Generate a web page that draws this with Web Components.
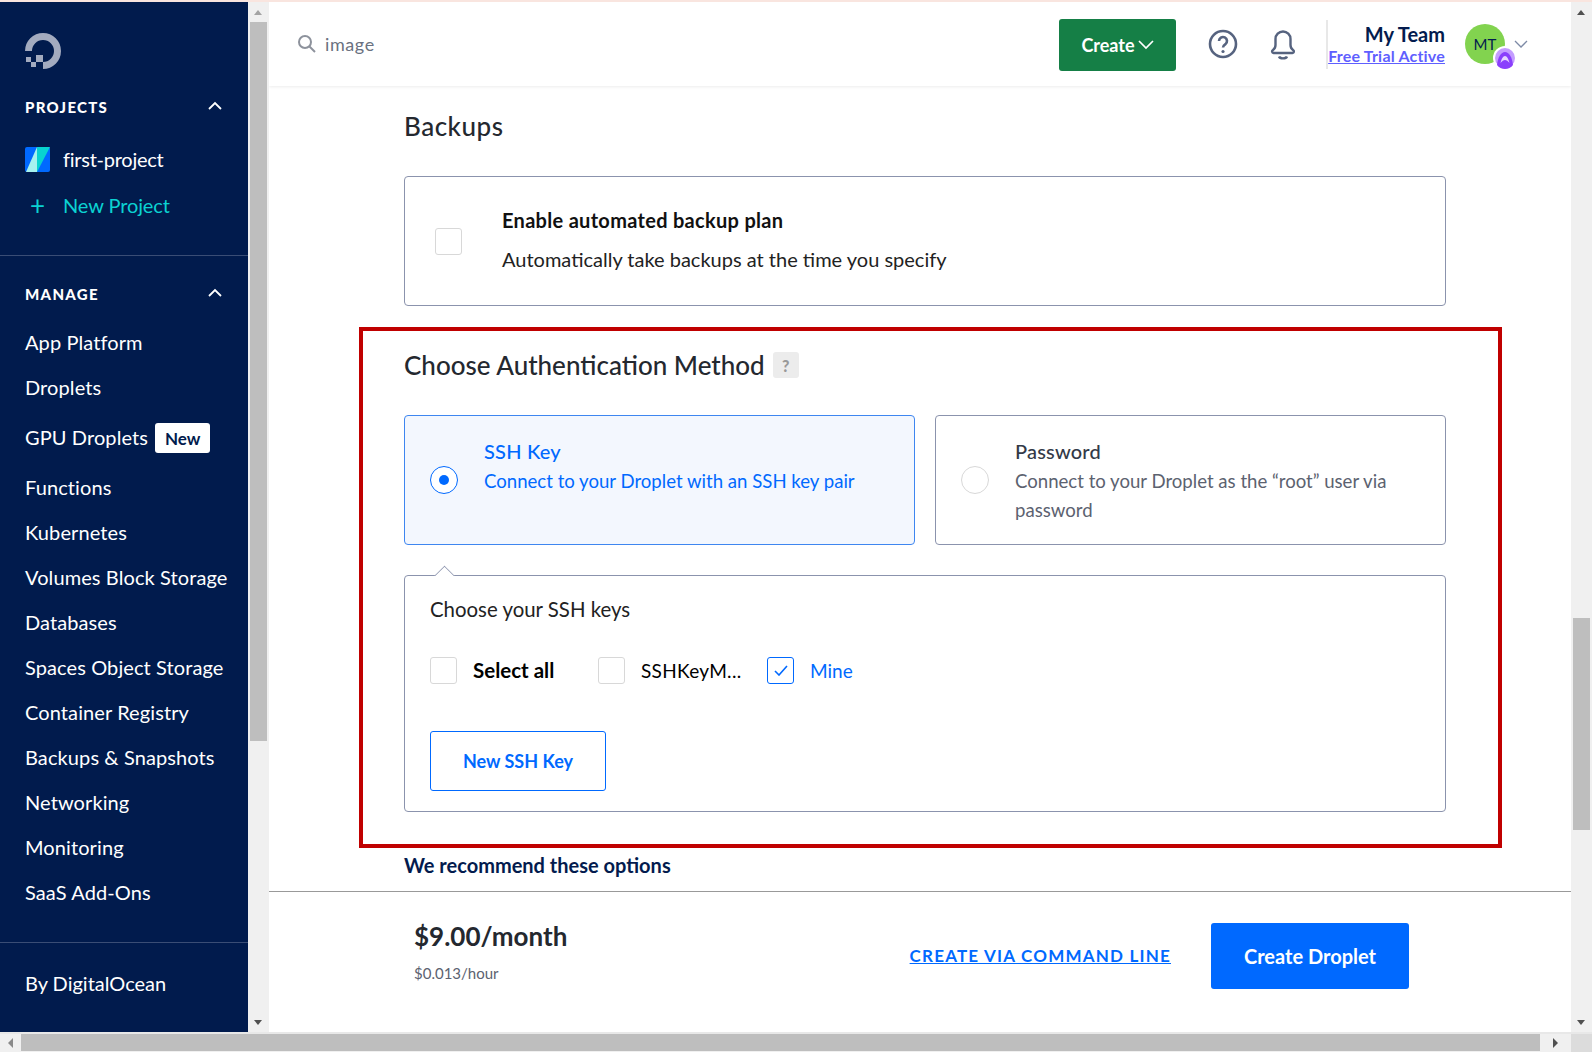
<!DOCTYPE html>
<html lang="en">
<head>
<meta charset="utf-8">
<title>Create Droplet</title>
<style>
  html, body { margin: 0; height: 100%; overflow: hidden; background: #fff; }
  body {
    font-family: Lato, "Open Sans", sans-serif;
    color: #031b4e;
    display: grid;
    grid-template-columns: 248px 21px 1fr 21px;
    grid-template-rows: 2px 1030px 20px;
    width: 1592px;
    height: 1052px;
  }
  .strip { grid-column: 1 / -1; background: #f9e5df; }
  do-hscroll { grid-column: 1 / -1; }
</style>
</head>
<body>
<div class="strip"></div>
<do-sidebar></do-sidebar>
<do-vscroll style="--thumb-top:20px;--thumb-h:719px;--up:#a3a3a3"></do-vscroll>
<do-main></do-main>
<do-vscroll style="--thumb-top:616px;--thumb-h:212px;--up:#505050"></do-vscroll>
<do-hscroll></do-hscroll>

<script>
class DoVscroll extends HTMLElement {
  connectedCallback() {
    this.attachShadow({ mode: 'open' });
    this.shadowRoot.innerHTML = `
      <style>
        :host { display: block; position: relative; background: #f0f0f0; }
        .thumb { position: absolute; left: 2px; right: 2px; top: var(--thumb-top); height: var(--thumb-h); background: #bebebe; }
        .up, .down { position: absolute; left: 6px; width: 0; height: 0; border-left: 4.5px solid transparent; border-right: 4.5px solid transparent; }
        .up { top: 8px; border-bottom: 5px solid var(--up); }
        .down { bottom: 7px; border-top: 5px solid #505050; }
      </style>
      <div class="up"></div><div class="thumb"></div><div class="down"></div>
    `;
  }
}

class DoHscroll extends HTMLElement {
  connectedCallback() {
    this.attachShadow({ mode: 'open' });
    this.shadowRoot.innerHTML = `
      <style>
        :host { display: grid; grid-template-columns: 21px 1519px 31px 21px; background: #f0f0f0; border-top: 2px solid #e8e8e8; box-sizing: border-box; }
        .thumb { background: #bebebe; margin-bottom: 1px; }
        .arrow { display: flex; align-items: center; justify-content: center; }
        .left { width: 0; height: 0; border-top: 5px solid transparent; border-bottom: 5px solid transparent; border-right: 5px solid #8a8a8a; }
        .right { width: 0; height: 0; border-top: 5px solid transparent; border-bottom: 5px solid transparent; border-left: 5px solid #505050; }
        .corner { background: #dcdcdc; }
      </style>
      <div class="arrow"><div class="left"></div></div>
      <div class="thumb"></div>
      <div class="arrow"><div class="right"></div></div>
      <div class="corner"></div>
    `;
  }
}

class DoSidebar extends HTMLElement {
  connectedCallback() {
    this.attachShadow({ mode: 'open' });
    const manage = ['App Platform', 'Droplets', 'GPU Droplets', 'Functions', 'Kubernetes', 'Volumes Block Storage', 'Databases', 'Spaces Object Storage', 'Container Registry', 'Backups & Snapshots', 'Networking', 'Monitoring', 'SaaS Add-Ons'];
    const links = manage.map(name => {
      if (name === 'GPU Droplets') return `<a class="item gpu">${name}<span class="badge">New</span></a>`;
      return `<a class="item">${name.replace('&', '&amp;')}</a>`;
    }).join('');
    const chevron = `<svg width="14" height="9" viewBox="0 0 14 9" fill="none" stroke="#fff" stroke-width="1.8"><path d="M1 8l6-6 6 6"/></svg>`;
    this.shadowRoot.innerHTML = `
      <style>
        :host { display: flex; flex-direction: column; background: #011b4d; color: #fff; font-size: 20px; overflow: hidden; letter-spacing: .1px; }
        .logo { display: block; margin: 31px 0 0 25px; }
        .head { display: flex; justify-content: space-between; align-items: center; height: 24px; padding: 0 26px 0 25px; font-size: 15px; font-weight: 900; letter-spacing: 1.3px; }
        .head svg { margin-top: -3px; }
        .head.projects { margin-top: 26px; }
        .project { display: flex; align-items: center; height: 46px; padding-left: 25px; gap: 13px; }
        .project.first { margin-top: 17px; letter-spacing: -.25px; }
        .project.add { color: #0bd2d2; letter-spacing: -.1px; }
        .plus { width: 25px; text-align: center; font-size: 26px; line-height: 1; font-weight: 400; }
        hr { border: 0; border-top: 1px solid #3a4d75; margin: 0; height: 0; }
        .manage-rule { margin-top: 27px; }
        .head.manage { margin-top: 26px; margin-bottom: 13px; }
        .item { display: flex; align-items: center; height: 45px; padding-left: 25px; white-space: nowrap; }
        .gpu { height: 55px; }
        .badge { background: #fff; color: #011b4d; font-size: 17px; font-weight: 700; border-radius: 3px; height: 30px; width: 55px; margin: 3px 0 0 7px; display: flex; align-items: center; justify-content: center; letter-spacing: 0; }
        .foot-rule { margin-top: 28px; }
        .by { margin-top: 26px; padding-left: 25px; height: 28px; display: flex; align-items: center; letter-spacing: 0; }
      </style>
      <svg class="logo" width="36" height="36" viewBox="0 0 36 36" fill="#a3abbf">
        <path d="M18 36v-7a11 11 0 1 0-11-11H0a18 18 0 1 1 18 18z"/>
        <rect x="11" y="22" width="7" height="7"/>
        <rect x="1" y="24" width="5" height="5"/>
        <rect x="6" y="29" width="5" height="5"/>
      </svg>
      <div class="head projects">PROJECTS ${chevron}</div>
      <div class="project first">
        <svg width="25" height="25" viewBox="0 0 25 25"><rect width="25" height="25" rx="2" fill="#0069ff"/><path d="M12 0v25H1z" fill="#a6f2ef"/><path d="M12 0h13L12 25z" fill="#08d3d0"/></svg>
        <span>first-project</span>
      </div>
      <div class="project add"><span class="plus">+</span><span>New Project</span></div>
      <hr class="manage-rule">
      <div class="head manage">MANAGE ${chevron}</div>
      ${links}
      <hr class="foot-rule">
      <div class="by">By DigitalOcean</div>
    `;
  }
}

class DoTopbar extends HTMLElement {
  connectedCallback() {
    this.attachShadow({ mode: 'open' });
    this.shadowRoot.innerHTML = `
      <style>
        :host { display: flex; align-items: center; height: 84px; flex: none; background: #fff; box-shadow: 0 1px 3px rgba(0,0,0,.08); position: relative; z-index: 2; padding-left: 28px; box-sizing: border-box; }
        .search { display: flex; align-items: center; gap: 8px; color: #6a7180; font-size: 18px; letter-spacing: .6px; }
        .create { margin-left: auto; margin-top: 2px; width: 117px; height: 52px; background: #157f46; color: #fff; border-radius: 3px; font-size: 18px; font-weight: 700; display: flex; align-items: center; justify-content: center; gap: 3px; }
        .help { margin-left: 32px; display: block; }
        .bell { margin-left: 31px; display: block; }
        .team { margin-left: 29px; border-left: 2px solid #e8e8e8; height: 49px; display: flex; flex-direction: column; align-items: flex-end; width: 117px; }
        .name { font-size: 20px; font-weight: 700; color: #031b4e; line-height: 24px; margin-top: 2px; }
        .trial { font-size: 16px; font-weight: 700; color: #5f5fff; text-decoration: underline; line-height: 20px; white-space: nowrap; letter-spacing: .2px; }
        .avatar { margin-left: 20px; position: relative; width: 40px; height: 40px; border-radius: 50%; background: #82d34f; color: #031b4e; font-size: 15px; display: flex; align-items: center; justify-content: center; }
        .org { position: absolute; right: -12px; bottom: -6px; display: block; }
        .caret { margin: 0 43px 0 9px; display: block; }
      </style>
      <div class="search">
        <svg width="20" height="20" viewBox="0 0 20 20" fill="none" stroke="#8d929c" stroke-width="2"><circle cx="8" cy="8" r="6"/><path d="M12.5 12.5L18 18"/></svg>
        <span>image</span>
      </div>
      <div class="create">Create
        <svg width="16" height="10" viewBox="0 0 16 10" fill="none" stroke="#fff" stroke-width="1.7"><path d="M1 1l7 7 7-7"/></svg>
      </div>
      <svg class="help" width="30" height="30" viewBox="0 0 30 30" fill="none" stroke="#56637f" stroke-width="2.6"><circle cx="15" cy="15" r="13"/><path d="M11 12a4 4 0 1 1 6.400 3.200c-1.400 1-2.400 1.600-2.400 3.300"/><circle cx="15" cy="22.500" r="1.600" fill="#56637f" stroke="none"/></svg>
      <svg class="bell" width="28" height="32" viewBox="0 0 28 32" fill="none" stroke="#56637f" stroke-width="2.4"><path d="M4 22c1.500-1 2.500-3 2.500-5v-6a7.500 7.500 0 0 1 15 0v6c0 2 1 4 2.500 5 1.500 1 1 3-.5 3h-19c-1.500 0-2-2-.5-3z"/><path d="M10 28.500c1 2.500 7 2.500 8 0"/></svg>
      <div class="team">
        <div class="name">My Team</div>
        <div class="trial">Free Trial Active</div>
      </div>
      <div class="avatar">MT
        <svg class="org" width="24" height="24" viewBox="0 0 24 24"><circle cx="12" cy="12" r="12" fill="#fff"/><circle cx="12" cy="12" r="10" fill="#c49cff"/><path d="M4 19c1-8 4-13 8-13s7 5 8 13a10 10 0 0 1-16 0z" fill="#8a3ffc"/><path d="M7.500 17c1-4 2.500-7 4.500-7s3.500 3 4.500 7c-1.500-2-3-3-4.500-3s-3 1-4.500 3z" fill="#e6d4ff"/></svg>
      </div>
      <svg class="caret" width="14" height="9" viewBox="0 0 14 9" fill="none" stroke="#7d8aa6" stroke-width="1.3"><path d="M1 1l6 6 6-6"/></svg>
    `;
  }
}

class DoCheck extends HTMLElement {
  connectedCallback() {
    this.attachShadow({ mode: 'open' });
    const on = this.hasAttribute('checked');
    this.shadowRoot.innerHTML = `
      <style>
        :host { display: inline-flex; align-items: center; gap: 16px; font-size: 19px; color: ${on ? '#0069ff' : '#000'}; white-space: nowrap; }
        .box { width: 27px; height: 27px; box-sizing: border-box; border: 1px solid ${on ? '#0069ff' : '#d8d8d8'}; border-radius: 3px; background: #fff; display: flex; align-items: center; justify-content: center; flex: none; }
      </style>
      <span class="box">${on ? '<svg width="14" height="11" viewBox="0 0 14 11" fill="none" stroke="#0069ff" stroke-width="1.6"><path d="M1 6l4 4 8-9"/></svg>' : ''}</span>
      <span><slot></slot></span>
    `;
  }
}

class DoRadioCard extends HTMLElement {
  connectedCallback() {
    this.attachShadow({ mode: 'open' });
    const on = this.hasAttribute('selected');
    this.shadowRoot.innerHTML = `
      <style>
        :host { display: flex; align-items: center; box-sizing: border-box; height: 130px; border: 1px solid ${on ? '#3e86f0' : '#8b93ad'}; border-radius: 4px; background: ${on ? '#f3f7fe' : '#fff'}; padding: 0 40px 0 25px; gap: 26px; font-size: 18.6px; color: ${on ? '#0069ff' : '#5c6270'}; }
        .radio { flex: none; width: 28px; height: 28px; box-sizing: border-box; border-radius: 50%; border: 1px solid ${on ? '#0069ff' : '#d8d8d8'}; background: #fff; display: flex; align-items: center; justify-content: center; }
        .dot { width: 10px; height: 10px; border-radius: 50%; background: #0069ff; }
        .text { align-self: flex-start; margin-top: 21px; line-height: 29px; }
        .title { font-size: 20px; font-weight: 500; letter-spacing: .2px; margin-bottom: 1px; color: ${on ? '#0069ff' : '#333a48'}; }
      </style>
      <span class="radio">${on ? '<span class="dot"></span>' : ''}</span>
      <div class="text">
        <div class="title">${this.getAttribute('title')}</div>
        <slot></slot>
      </div>
    `;
  }
}

class DoBackups extends HTMLElement {
  connectedCallback() {
    this.attachShadow({ mode: 'open' });
    this.shadowRoot.innerHTML = `
      <style>
        :host { display: block; }
        h2 { font-size: 26px; font-weight: 500; letter-spacing: .5px; color: #24282f; margin: 0; height: 40px; line-height: 40px; padding-top: 20px; }
        .card { margin-top: 30px; box-sizing: border-box; height: 130px; border: 1px solid #8b93ad; border-radius: 4px; display: flex; align-items: center; padding-left: 30px; gap: 40px; }
        .box { width: 27px; height: 27px; box-sizing: border-box; border: 1px solid #d8d8d8; border-radius: 3px; flex: none; }
        .copy { padding-bottom: 4px; }
        .t { font-size: 20px; font-weight: 700; letter-spacing: .3px; color: #111; line-height: 28px; }
        .d { font-size: 20px; color: #222; margin-top: 11px; line-height: 28px; }
      </style>
      <h2>Backups</h2>
      <div class="card">
        <div class="box"></div>
        <div class="copy">
          <div class="t">Enable automated backup plan</div>
          <div class="d">Automatically take backups at the time you specify</div>
        </div>
      </div>
    `;
  }
}

class DoAuth extends HTMLElement {
  connectedCallback() {
    this.attachShadow({ mode: 'open' });
    this.shadowRoot.innerHTML = `
      <style>
        :host { display: block; box-sizing: border-box; margin: 21px -56px 0 -45px; height: 521px; border: 4px solid #c00000; padding: 0 52px 0 41px; }
        .head { display: flex; align-items: center; gap: 8px; height: 40px; margin-top: 14px; }
        h2 { font-size: 26px; font-weight: 500; color: #24282f; margin: 0; }
        .q { width: 26px; height: 26px; background: #ececec; border-radius: 3px; color: #999; font-size: 16px; font-weight: 900; display: flex; align-items: center; justify-content: center; }
        .cards { display: grid; grid-template-columns: 511px 511px; column-gap: 20px; margin-top: 30px; }
        .panel { position: relative; margin-top: 30px; box-sizing: border-box; height: 237px; border: 1px solid #8b93ad; border-radius: 4px; padding: 21px 25px 0; }
        .notch { position: absolute; left: 31px; top: -9px; width: 16px; height: 16px; background: #fff; border-left: 1px solid #8b93ad; border-top: 1px solid #8b93ad; transform: rotate(45deg) scale(.82); }
        .lead { font-size: 20.4px; color: #222; line-height: 24px; position: relative; }
        .row { display: flex; align-items: center; margin-top: 35px; height: 28px; }
        .all { font-weight: 700; font-size: 20.5px; }
        .key { letter-spacing: .3px; }
        .btn { margin-top: 47px; width: 176px; height: 60px; box-sizing: border-box; border: 1px solid #0069ff; border-radius: 3px; color: #0069ff; font-size: 18px; font-weight: 700; display: flex; align-items: center; justify-content: center; }
      </style>
      <div class="head"><h2>Choose Authentication Method</h2><span class="q">?</span></div>
      <div class="cards">
        <do-radio-card selected title="SSH Key">Connect to your Droplet with an SSH key pair</do-radio-card>
        <do-radio-card title="Password">Connect to your Droplet as the “root” user via password</do-radio-card>
      </div>
      <div class="panel">
        <div class="notch"></div>
        <div class="lead">Choose your SSH keys</div>
        <div class="row">
          <do-check style="width:168px"><b class="all">Select all</b></do-check>
          <do-check style="width:169px"><span class="key">SSHKeyM...</span></do-check>
          <do-check checked>Mine</do-check>
        </div>
        <div class="btn">New SSH Key</div>
      </div>
    `;
  }
}

class DoFooter extends HTMLElement {
  connectedCallback() {
    this.attachShadow({ mode: 'open' });
    this.shadowRoot.innerHTML = `
      <style>
        :host { display: flex; align-items: center; flex: none; height: 141px; box-sizing: border-box; border-top: 1px solid #999; background: #fff; padding: 0 162px 13px 145px; }
        .info { margin-bottom: 10px; }
        .price { font-size: 26px; font-weight: 700; color: #24282f; line-height: 34px; }
        .hour { font-size: 15px; color: #5c6270; margin-top: 11px; }
        a { margin-left: auto; font-size: 17px; font-weight: 700; letter-spacing: 1.2px; color: #0069ff; text-decoration: underline; }
        .go { margin-left: 40px; width: 198px; height: 66px; background: #0069ff; color: #fff; font-size: 20px; font-weight: 700; border-radius: 3px; display: flex; align-items: center; justify-content: center; }
      </style>
      <div class="info">
        <div class="price">$9.00/month</div>
        <div class="hour">$0.013/hour</div>
      </div>
      <a>CREATE VIA COMMAND LINE</a>
      <div class="go">Create Droplet</div>
    `;
  }
}

class DoMain extends HTMLElement {
  connectedCallback() {
    this.attachShadow({ mode: 'open' });
    this.shadowRoot.innerHTML = `
      <style>
        :host { display: flex; flex-direction: column; min-width: 0; overflow: hidden; background: #fff; }
        .scroll { flex: 1; min-height: 0; overflow: hidden; padding: 0 125px 0 135px; }
        .rec { margin-top: 5px; font-size: 20px; font-weight: 700; color: #031b4e; line-height: 24px; }
      </style>
      <do-topbar></do-topbar>
      <div class="scroll">
        <do-backups></do-backups>
        <do-auth></do-auth>
        <div class="rec">We recommend these options</div>
      </div>
      <do-footer></do-footer>
    `;
  }
}

customElements.define('do-vscroll', DoVscroll);
customElements.define('do-hscroll', DoHscroll);
customElements.define('do-sidebar', DoSidebar);
customElements.define('do-topbar', DoTopbar);
customElements.define('do-check', DoCheck);
customElements.define('do-radio-card', DoRadioCard);
customElements.define('do-backups', DoBackups);
customElements.define('do-auth', DoAuth);
customElements.define('do-footer', DoFooter);
customElements.define('do-main', DoMain);
</script>
</body>
</html>
